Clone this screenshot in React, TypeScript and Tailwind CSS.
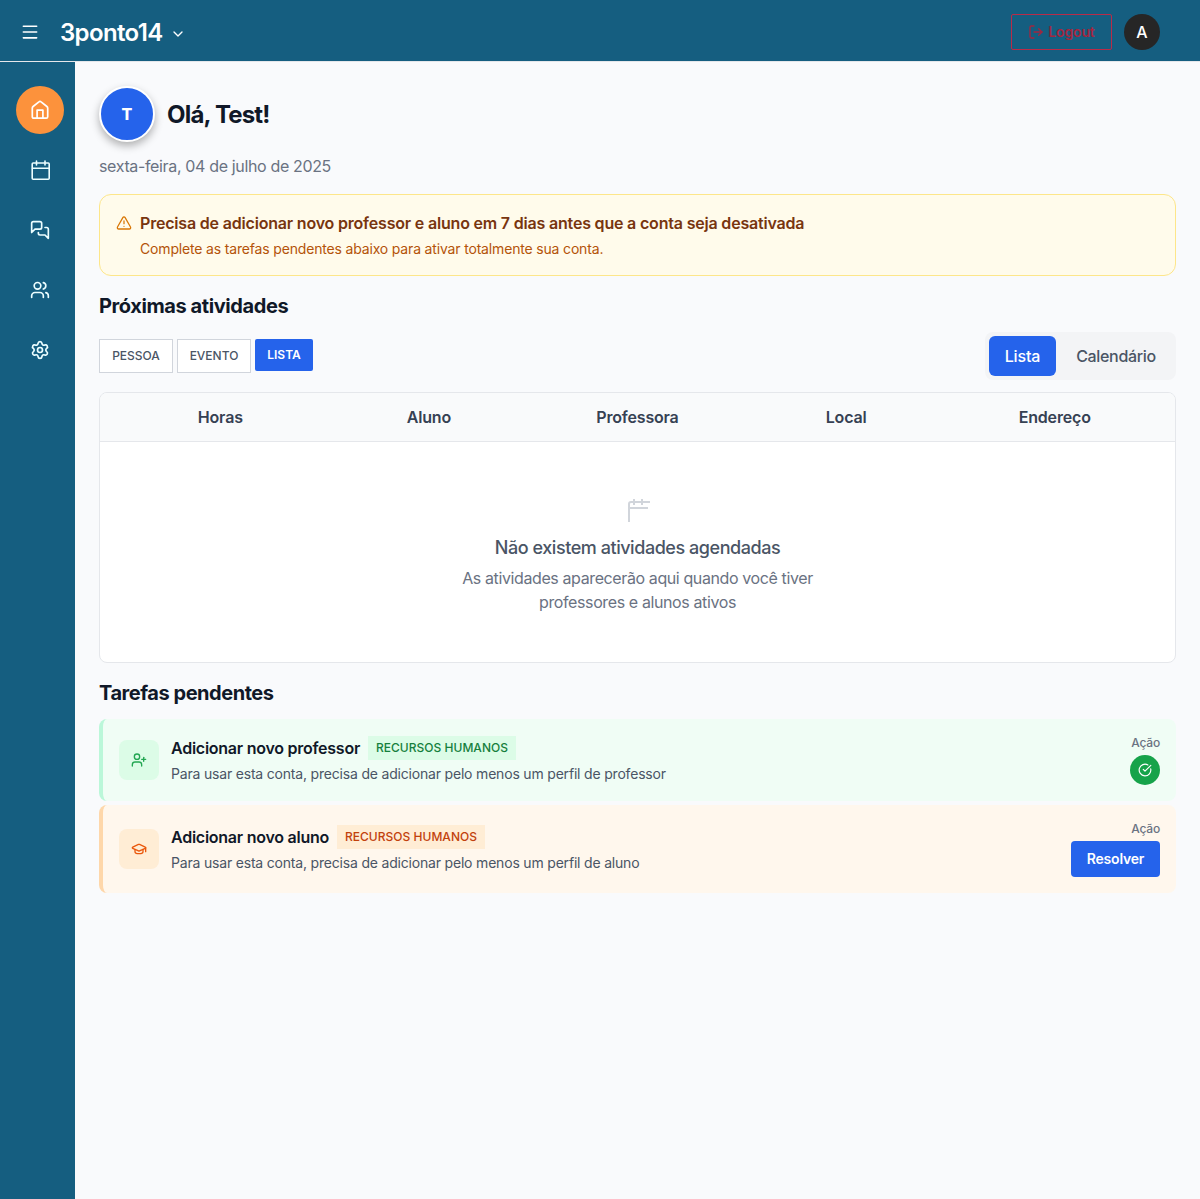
import type { ReactNode } from 'react';
import { Menu, ChevronDown, LogOut, Users, Settings, TriangleAlert, UserPlus, GraduationCap, CircleCheckBig } from 'lucide-react';

function HomeIcon() {
  return (
    <svg width="20" height="20" viewBox="0 0 20 20" fill="none" stroke="currentColor" strokeWidth="1.7" strokeLinejoin="round">
      <path d="M2.3 8.1c0-.6.3-1.2.8-1.6l5.8-4.6a1.7 1.7 0 0 1 2.2 0l5.8 4.6c.5.4.8 1 .8 1.6v8.7c0 .8-.6 1.4-1.4 1.4H3.7c-.8 0-1.4-.6-1.4-1.4z" />
      <path d="M7.1 18v-7.9h5.8V18" />
    </svg>
  );
}

function CalendarIcon() {
  return (
    <svg className="translate-x-px" width="20" height="20" viewBox="0 0 20 20" fill="none" stroke="currentColor" strokeWidth="1.6" strokeLinecap="round">
      <rect x="1.2" y="3" width="17" height="16.2" rx="1" />
      <path d="M5.5 1v4M14 1v4M1.5 8.3h16.5" />
    </svg>
  );
}

function ChatIcon() {
  return (
    <svg width="20" height="20" viewBox="0 0 24 24" fill="none" stroke="currentColor" strokeWidth="2" strokeLinecap="round" strokeLinejoin="round">
      <path d="M14 9a2 2 0 0 1-2 2H6l-4 4V4a2 2 0 0 1 2-2h8a2 2 0 0 1 2 2z" />
      <path d="M18 9h2a2 2 0 0 1 2 2v11l-4-4h-6a2 2 0 0 1-2-2v-1" />
    </svg>
  );
}

function NavItem({ active, children }: { active?: boolean; children: ReactNode }) {
  return (
    <a className={active ? 'flex size-12 items-center justify-center rounded-full bg-[#fc923c] text-white' : 'flex size-12 items-center justify-center text-[#ecfeff]'}>
      {children}
    </a>
  );
}

function Header() {
  return (
    <header className="flex h-[62px] shrink-0 items-center justify-between border-b border-[#e5e7eb] bg-[#155e80] pl-5 pr-10 pt-[3px] text-white">
      <div className="flex items-center">
        <Menu size={20} strokeWidth={1.9} />
        <span className="ml-5 translate-y-px text-2xl leading-8 font-semibold tracking-[-0.65px]">3ponto14</span>
        <ChevronDown size={16} strokeWidth={2} className="ml-[7px] mt-[3px]" />
      </div>
      <div className="flex items-center gap-3">
        <button className="flex h-9 w-[101px] items-center justify-center gap-1 rounded-[2px] border border-[#b92b48] text-sm font-semibold tracking-[-0.15px] text-[#a3263f]">
          <LogOut size={16} strokeWidth={2} />
          Logout
        </button>
        <span className="flex size-9 items-center justify-center rounded-full bg-[#262626] text-base font-medium">A</span>
      </div>
    </header>
  );
}

function Sidebar() {
  return (
    <nav className="flex w-[75px] shrink-0 flex-col items-center gap-3 bg-[#155e80] pt-6 pl-[5px]">
      <NavItem active><HomeIcon /></NavItem>
      <NavItem><CalendarIcon /></NavItem>
      <NavItem><ChatIcon /></NavItem>
      <NavItem><Users size={20} strokeWidth={2} /></NavItem>
      <NavItem><Settings size={20} strokeWidth={2} /></NavItem>
    </nav>
  );
}

function Activities() {
  return (
    <section className="mt-3 h-[271px] overflow-hidden rounded-lg border border-gray-200 bg-white">
      <div className="grid h-[49px] grid-cols-5 items-center border-b border-gray-200 bg-[#f9fafb] px-4 text-center font-semibold tracking-[-0.18px] text-gray-700">
        <span>Horas</span><span>Aluno</span><span>Professora</span><span>Local</span><span>Endereço</span>
      </div>
      <div className="flex flex-col items-center pt-14">
        <svg width="24" height="24" viewBox="0 0 24 24" fill="none" stroke="#d1d5db" strokeWidth="2">
          <path d="M3 24V6a2 2 0 0 1 2-2H24M3 10h19M8 1v6M16 1v6" />
        </svg>
        <h3 className="mt-3 text-lg leading-7 font-medium tracking-[-0.45px] text-gray-600">Não existem atividades agendadas</h3>
        <p className="mt-1 w-96 text-center tracking-[-0.39px] text-gray-500">As atividades aparecerão aqui quando você tiver<br />professores e alunos ativos</p>
      </div>
    </section>
  );
}

export default function App() {
  return (
    <div className="flex h-[1199px] flex-col bg-[#f9fafc] font-['Inter',sans-serif] text-base">
      <Header />
      <div className="flex min-h-0 flex-1">
        <Sidebar />
        <main className="min-w-0 flex-1 px-6 pt-6">
          <div className="flex items-center gap-3">
            <span className="flex size-14 items-center justify-center rounded-full border-2 border-white bg-[#2563eb] font-extrabold text-white shadow-[0_4px_8px_rgba(0,0,0,0.3)]">T</span>
            <h1 className="translate-y-px text-2xl font-bold tracking-[-0.8px] text-gray-900">Olá, Test!</h1>
          </div>
          <p className="mt-3 tracking-[-0.35px] text-gray-500">sexta-feira, 04 de julho de 2025</p>

          <div className="mt-4 flex h-[82px] gap-2 rounded-xl border border-[#fde68a] bg-[#fffbeb] px-4 pt-4">
            <TriangleAlert size={16} strokeWidth={1.9} className="mt-1 text-[#d97706]" />
            <div>
              <p className="font-semibold tracking-[-0.188px] text-[#78350f]">Precisa de adicionar novo professor e aluno em 7 dias antes que a conta seja desativada</p>
              <p className="mt-1 text-sm tracking-[-0.168px] text-[#b45309]">Complete as tarefas pendentes abaixo para ativar totalmente sua conta.</p>
            </div>
          </div>

          <h2 className="mt-4 text-xl font-bold tracking-[-0.41px] text-gray-900">Próximas atividades</h2>
          <div className="mt-3 flex h-12 items-center justify-between">
            <div className="flex items-start gap-1 text-xs font-medium text-gray-600">
              <button className="h-[34px] w-[74px] border border-gray-300 bg-white">PESSOA</button>
              <button className="h-[34px] w-[74px] border border-gray-300 bg-white">EVENTO</button>
              <button className="h-8 w-[58px] rounded-[2px] bg-[#2563eb] font-semibold text-white">LISTA</button>
            </div>
            <div className="flex h-12 items-center gap-1 rounded-lg bg-gray-100 p-1 font-medium">
              <button className="h-10 w-[67px] rounded-md bg-[#2563eb] tracking-[-0.15px] text-white">Lista</button>
              <button className="h-10 w-28 tracking-[-0.33px] text-gray-600">Calendário</button>
            </div>
          </div>

          <Activities />

          <h2 className="mt-4 text-xl font-bold tracking-[-0.46px] text-gray-900">Tarefas pendentes</h2>
          <div className="mt-3 flex h-[82px] items-center rounded-lg border-l-4 border-[#bbf7d9] bg-[#f0fdf5] px-4">
            <span className="flex size-10 items-center justify-center rounded-lg bg-[#dcfce7] text-[#22a652]"><UserPlus size={16} strokeWidth={2} /></span>
            <div className="ml-3 flex-1">
              <div className="flex items-center gap-2">
                <h3 className="font-semibold tracking-[-0.25px] text-gray-900">Adicionar novo professor</h3>
                <span className="h-6 bg-[#dcfce7] px-2 text-xs leading-6 font-medium tracking-[0.02px] text-[#15803d]">RECURSOS HUMANOS</span>
              </div>
              <p className="mt-1 text-sm tracking-[-0.19px] text-gray-600">Para usar esta conta, precisa de adicionar pelo menos um perfil de professor</p>
            </div>
            <div className="flex flex-col items-end gap-1 text-xs font-medium tracking-[-0.2px] text-gray-500">
              Ação
              <span className="flex size-[30px] items-center justify-center rounded-full bg-[#16a34a] text-white"><CircleCheckBig size={14} strokeWidth={2} /></span>
            </div>
          </div>
          <div className="mt-1 flex h-[88px] items-center rounded-lg border-l-4 border-[#fed7aa] bg-[#fff7ed] px-4">
            <span className="flex size-10 items-center justify-center rounded-lg bg-[#ffedd5] text-[#ea580c]"><GraduationCap size={16} strokeWidth={2} /></span>
            <div className="ml-3 flex-1">
              <div className="flex items-center gap-2">
                <h3 className="font-semibold tracking-[-0.25px] text-gray-900">Adicionar novo aluno</h3>
                <span className="h-6 bg-[#ffedd5] px-2 text-xs leading-6 font-medium tracking-[0.02px] text-[#c2410c]">RECURSOS HUMANOS</span>
              </div>
              <p className="mt-1 text-sm tracking-[-0.19px] text-gray-600">Para usar esta conta, precisa de adicionar pelo menos um perfil de aluno</p>
            </div>
            <div className="flex flex-col items-end gap-1 text-xs font-medium tracking-[-0.2px] text-gray-500">
              Ação
              <button className="h-9 w-[89px] rounded bg-[#2563eb] text-sm font-semibold text-white">Resolver</button>
            </div>
          </div>
        </main>
      </div>
    </div>
  );
}
